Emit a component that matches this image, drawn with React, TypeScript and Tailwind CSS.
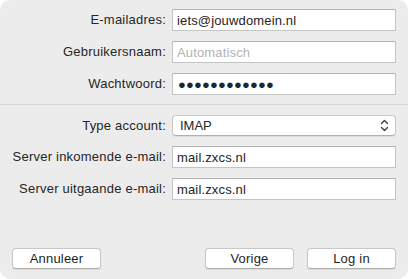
const fieldBase =
  "h-full w-full bg-white border border-[#c4c4c4] border-t-[#b4b4b4] px-[4px] text-[13px] tracking-[0.15px] leading-none text-[#242424] flex items-center";

function Row({ label, children, h }: { label: string; children: React.ReactNode; h: string }) {
  return (
    <div className={`flex items-center ${h}`}>
      <div className="w-[167px] shrink-0 pr-[1px] text-right text-[13px] tracking-[0.22px] text-[#262626]">{label}</div>
      <div className="ml-[5px] h-full w-[224px]">{children}</div>
    </div>
  );
}

function Chevrons() {
  return (
    <svg width="9" height="13" viewBox="0 0 9 13" fill="none" stroke="#3a3a3a" strokeWidth="1.3" strokeLinecap="round" strokeLinejoin="round">
      <path d="M1.5 4.5 L4.5 1.5 L7.5 4.5" />
      <path d="M1.5 8.5 L4.5 11.5 L7.5 8.5" />
    </svg>
  );
}

function Button({ children, w }: { children: React.ReactNode; w: string }) {
  return (
    <button
      className={`${w} h-[21px] rounded-[4px] bg-white border border-[#c8c8c8] border-b-[#acacac] shadow-[0_0.5px_1px_rgba(0,0,0,0.08)] text-[13px] tracking-[0.2px] text-[#1f1f1f] leading-none flex items-center justify-center`}
    >
      {children}
    </button>
  );
}

export default function App() {
  return (
    <div className="w-[408px] h-[279px] bg-white" style={{ fontFamily: '"Liberation Sans", Arial, sans-serif' }}>
      <div className="w-full h-full rounded-[10px] bg-[#ececec] flex flex-col">
        <div className="flex flex-col gap-[10px] pt-[9px]">
          <Row label="E-mailadres:" h="h-[22px]">
            <div className={fieldBase}>iets@jouwdomein.nl</div>
          </Row>
          <Row label="Gebruikersnaam:" h="h-[22px]">
            <div className={`${fieldBase} text-[#b3b3b3]`}>Automatisch</div>
          </Row>
          <Row label="Wachtwoord:" h="h-[22px]">
            <div className={`${fieldBase} pl-[5px] text-[7px] tracking-[0.2px] text-[#2a2a2a]`}>●●●●●●●●●●●●</div>
          </Row>
        </div>

        <div className="mt-[9px] h-px bg-[#d6d6d6]" />

        <div className="flex flex-col gap-[10px] pt-[10px]">
          <Row label="Type account:" h="h-[21px]">
            <div className="h-full w-full rounded-[4px] bg-white border border-[#c8c8c8] border-b-[#b0b0b0] shadow-[0_0.5px_1px_rgba(0,0,0,0.06)] flex items-center justify-between pl-[7px] pr-[6px] text-[13px] text-[#242424]">
              <span>IMAP</span>
              <Chevrons />
            </div>
          </Row>
          <Row label="Server inkomende e-mail:" h="h-[22px]">
            <div className={fieldBase}>mail.zxcs.nl</div>
          </Row>
          <Row label="Server uitgaande e-mail:" h="h-[22px]">
            <div className={fieldBase}>mail.zxcs.nl</div>
          </Row>
        </div>

        <div className="mt-auto mb-[10px] flex items-center px-[12px]">
          <Button w="w-[89px]">Annuleer</Button>
          <div className="flex-1" />
          <Button w="w-[89px]">Vorige</Button>
          <div className="w-[13px]" />
          <Button w="w-[89px]">Log in</Button>
        </div>
      </div>
    </div>
  );
}
